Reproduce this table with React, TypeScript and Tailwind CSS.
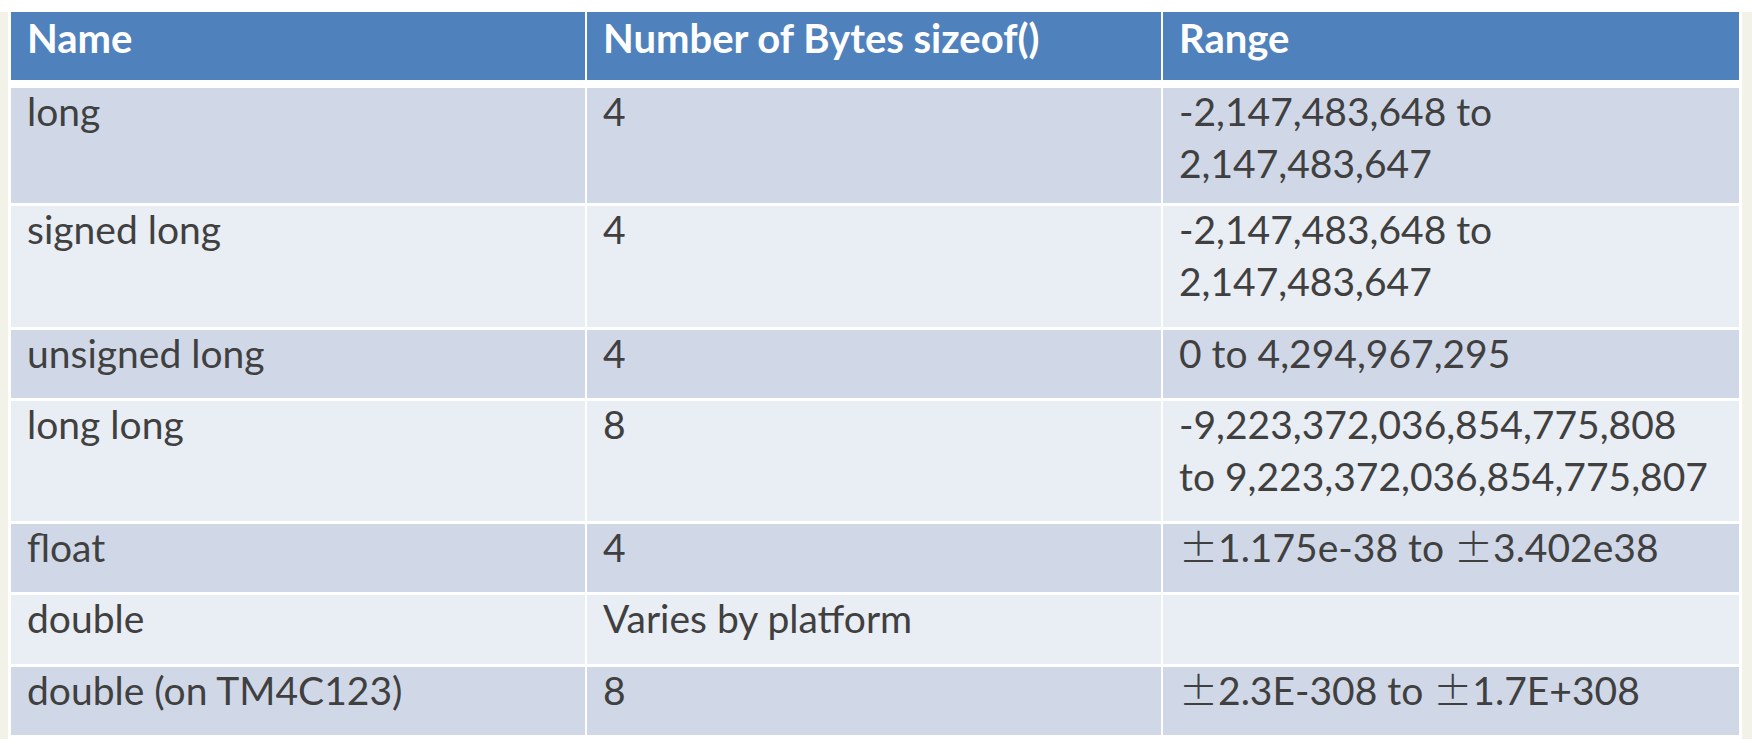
import React from 'react';

type Row = { name: string; bytes: string; range: string[]; h: string; bg: string };

const rows: Row[] = [
  { name: 'long', bytes: '4', range: ['-2,147,483,648 to', '2,147,483,647'], h: 'h-[115px]', bg: 'bg-[#d0d8e8]' },
  { name: 'signed long', bytes: '4', range: ['-2,147,483,648 to', '2,147,483,647'], h: 'h-[121px]', bg: 'bg-[#e9edf4]' },
  { name: 'unsigned long', bytes: '4', range: ['0 to 4,294,967,295'], h: 'h-[68px]', bg: 'bg-[#d0d8e8]' },
  { name: 'long long', bytes: '8', range: ['-9,223,372,036,854,775,808', 'to 9,223,372,036,854,775,807'], h: 'h-[120px]', bg: 'bg-[#e9edf4]' },
  { name: 'float', bytes: '4', range: ['\u00b11.175e-38 to \u00b13.402e38'], h: 'h-[68px]', bg: 'bg-[#d0d8e8]' },
  { name: 'double', bytes: 'Varies by platform', range: [], h: 'h-[69px]', bg: 'bg-[#e9edf4]' },
  { name: 'double (on TM4C123)', bytes: '8', range: ['\u00b12.3E-308 to \u00b11.7E+308'], h: 'h-[68px]', bg: 'bg-[#d0d8e8]' },
];

const cell = 'pl-[16px] whitespace-nowrap';

// the ± in the original comes out full width, like a CJK font draws it
const Line: React.FC<{ text: string }> = ({ text }) => {
  const parts = text.split('\u00b1');
  return (
    <div>
      {parts.map((p, i) => (
        <React.Fragment key={i}>
          {i > 0 && <span className="font-['Noto_Sans_CJK_JP',sans-serif] font-light leading-none">{'\u00b1'}</span>}
          {p}
        </React.Fragment>
      ))}
    </div>
  );
};

const App: React.FC = () => {
  return (
    <div className="w-[1752px] h-[744px] bg-white flex overflow-hidden font-['Lato','Open_Sans',sans-serif]">
      {/* left edge of the slide */}
      <div className="w-[8px] mt-[12px] h-[727px] bg-[#f2f2e8]"></div>

      <div className="ml-[3px] mt-[12px] w-[1728px] flex flex-col gap-[3px]">
        <div className="h-[68px] mb-[5px] grid grid-cols-[574px_574px_1fr] gap-x-[2px] text-white font-bold text-[40px] leading-[48px]">
          <div className={`bg-[#4f81bd] pt-[2px] ${cell}`}>Name</div>
          <div className={`bg-[#4f81bd] pt-[2px] ${cell}`}>Number of Bytes sizeof()</div>
          <div className={`bg-[#4f81bd] pt-[2px] ${cell}`}>Range</div>
        </div>

        {rows.map((r) => (
          <div key={r.name} className={`${r.h} grid grid-cols-[574px_574px_1fr] gap-x-[2px] text-[#404040] text-[39px] leading-[52px]`}>
            <div className={`${r.bg} ${cell}`}>
              <div className="-mt-[3px]">{r.name}</div>
            </div>
            <div className={`${r.bg} ${cell}`}>
              <div className="-mt-[3px]">{r.bytes}</div>
            </div>
            <div className={`${r.bg} ${cell}`}>
              <div className="-mt-[3px]">
                {r.range.map((line) => (
                  <Line key={line} text={line} />
                ))}
              </div>
            </div>
          </div>
        ))}
      </div>

      {/* right edge of the slide */}
      <div className="ml-[3px] w-[10px] mt-[12px] h-[727px] bg-[#f2f2e8]"></div>
    </div>
  );
};

export default App;
